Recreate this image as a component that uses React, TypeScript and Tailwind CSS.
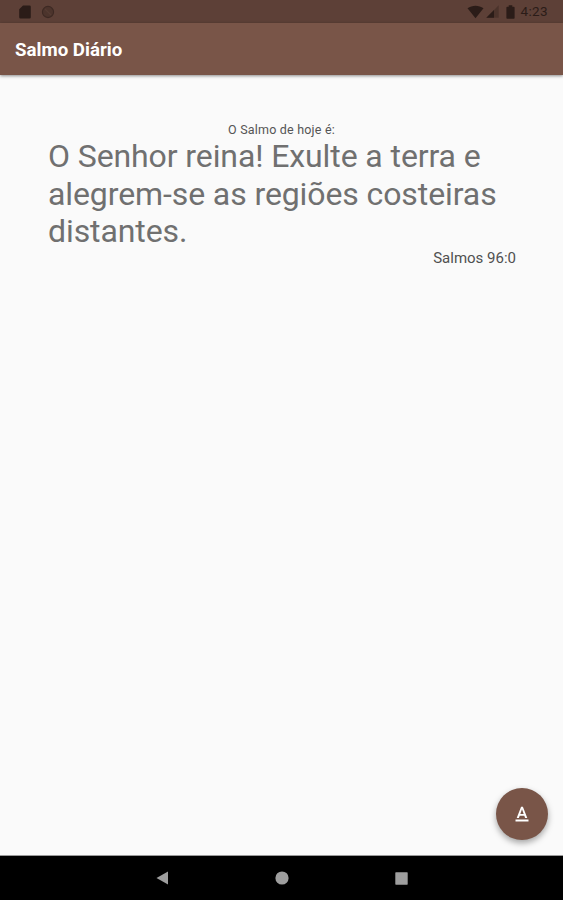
function StatusBar() {
  return (
    <div className="flex h-[23px] shrink-0 items-center justify-between bg-[#5d4037] pr-[15px] pl-[19px] text-[#2b1c18]">
      <div className="flex items-center gap-[10px]">
        <svg width="12" height="14" viewBox="0 0 12 14" fill="currentColor">
          <path d="M4 .5h6.500a1.300 1.300 0 0 1 1.300 1.300v10.400a1.300 1.300 0 0 1-1.300 1.300h-9A1.300 1.300 0 0 1 .2 12.200V4.300z" />
        </svg>
        <svg width="14" height="14" viewBox="0 0 14 14">
          <circle cx="7" cy="7" r="5.600" fill="#4c342c" stroke="#3d2923" strokeWidth="1.100" />
          <path d="M4 4l6 6" stroke="#553b33" strokeWidth="1.200" />
        </svg>
      </div>
      <div className="flex items-center">
        <svg width="17" height="14" viewBox="0 0 17 14" fill="currentColor">
          <path d="M.5 3.300C5-.1 12-.1 16.500 3.300L8.500 13.300z" />
        </svg>
        <svg className="ml-[2px]" width="13" height="13" viewBox="0 0 13 13" fill="currentColor">
          <path d="M.3 12.700L12.700.3v12.400z" opacity="0.35" />
          <path d="M.3 12.700L8 5v7.700z" />
        </svg>
        <svg className="ml-[7px]" width="9" height="14" viewBox="0 0 9 14" fill="currentColor">
          <path d="M2.700.3h3.600v1.400h1.500a.8.8 0 0 1 .8.8v10.400a.8.8 0 0 1-.8.8H1.200a.8.8 0 0 1-.8-.8V2.500a.8.8 0 0 1 .8-.8h1.500z" />
        </svg>
        <span className="ml-[6px] pt-px text-[13.500px] leading-none tracking-[0.350px]">4:23</span>
      </div>
    </div>
  );
}

function AppHeader() {
  return (
    <header className="relative z-10 flex h-[52px] shrink-0 items-center bg-[#795548] px-[15px] pt-[2px] shadow-[0_1px_3px_rgba(0,0,0,0.45)]">
      <h1 className="text-[18.700px] leading-none font-bold text-white">Salmo Diário</h1>
    </header>
  );
}

function NavBar() {
  return (
    <nav className="flex h-[44px] shrink-0 items-center bg-black pl-[156px] text-[#9e9e9e]">
      <svg width="12" height="14" viewBox="0 0 12 14" fill="currentColor">
        <path d="M.5 7L12 .5v13z" />
      </svg>
      <svg className="ml-[107px]" width="14" height="14" viewBox="0 0 14 14" fill="currentColor">
        <circle cx="7" cy="7" r="6.600" />
      </svg>
      <svg className="ml-[106px]" width="13" height="13" viewBox="0 0 13 13" fill="currentColor">
        <rect x="0.300" y="0.300" width="12.400" height="12.400" rx="0.600" />
      </svg>
    </nav>
  );
}

export default function App() {
  return (
    <div className="flex h-[900px] w-[563px] flex-col overflow-hidden bg-[#fafafa] font-['Roboto',sans-serif]">
      <StatusBar />
      <AppHeader />
      <main className="relative flex-1 border-b border-[#9a9a9a] px-[48px] pt-[47px]">
        <p className="text-center text-[12.500px] leading-[15px] tracking-[0.200px] text-[#555555]">O Salmo de hoje é:</p>
        <p className="pt-px text-[32px] leading-[37.500px] tracking-[-0.100px] text-[#707070]">
          O Senhor reina! Exulte a terra e<br />
          alegrem-se as regiões costeiras<br />
          distantes.
        </p>
        <p className="-mt-px -mr-px text-right text-[15px] leading-[17px] text-[#505050]">Salmos 96:0</p>
        <button
          aria-label="Formatar texto"
          className="absolute right-[15px] bottom-[15px] flex size-[52px] items-center justify-center rounded-full bg-[#795548] text-white shadow-[0_3px_6px_rgba(0,0,0,0.35)]"
        >
          <svg width="22" height="22" viewBox="0 0 22 22" fill="currentColor">
            <path d="M4.500 16.500h13v2h-13z" />
            <path fillRule="evenodd" d="M10.100 3.800h1.800l4.400 11.200h-2.200l-.8-2.200H8.700L7.900 15H5.700zM9.300 11h3.400L11 6.300z" />
          </svg>
        </button>
      </main>
      <NavBar />
    </div>
  );
}
